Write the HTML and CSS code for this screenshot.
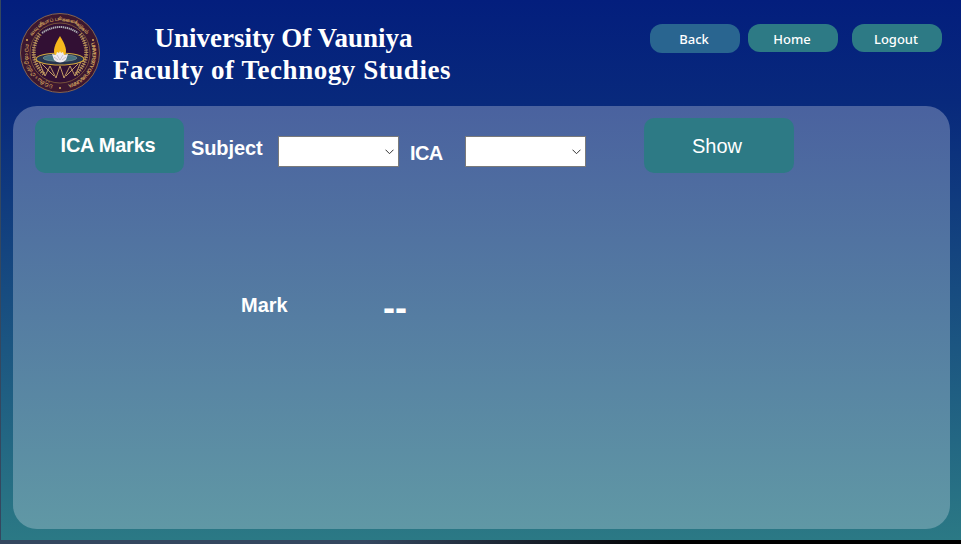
FILE: index.html
```html
<!DOCTYPE html>
<html lang="en">
<head>
<meta charset="utf-8">
<title>ICA Marks</title>
<link rel="stylesheet" href="styles.css">
</head>
<body>
<div class="window">
  <header class="header">
    <svg class="crest" viewBox="0 0 80 80" aria-hidden="true">
      <defs>
        <path id="ring-top" d="M12.4 22.8A32.5 32.5 0 0 1 67 22"/>
        <path id="ring-right" d="M70.9 30A32.5 32.5 0 0 1 46.8 71.8"/>
        <path id="ring-left" d="M33.2 71.8A32.5 32.5 0 0 1 9.1 30"/>
      </defs>
      <circle cx="40" cy="40" r="39.5" fill="#3c1730" stroke="#85634e" stroke-width="1"/>
      <circle cx="40" cy="40" r="30" fill="#321034" stroke="#86613e" stroke-width=".8"/>
      <g class="crest-text">
        <text><textPath href="#ring-top" textLength="63">வவுனியாப் பல்கலைக்கழகம்</textPath></text>
        <text><textPath href="#ring-right" textLength="53">UNIVERSITY OF VAVUNIYA</textPath></text>
        <text><textPath href="#ring-left" textLength="53">වවුනියා විශ්වවිද්‍යාලය</textPath></text>
      </g>
      <path d="M22 20Q40 8 58 20" fill="none" stroke="#a9aab0" stroke-width="2" stroke-dasharray="1.4 .6"/>
      <path d="M20 21C11 33 11 50 24 61M60 21C69 33 69 50 56 61" fill="none" stroke="#b08b55" stroke-width="4" stroke-dasharray="1.2 1.2"/>
      <path d="M20 21C11 33 11 50 24 61M60 21C69 33 69 50 56 61" fill="none" stroke="#c49d62" stroke-width=".7"/>
      <path d="M18 46L25 63M62 46L55 63M25 63L30 53 36 65 40 53 44 65 50 53 55 63M22 51L34 63M58 51L46 63" fill="none" stroke="#c19a65" stroke-width="1"/>
      <ellipse cx="40" cy="46" rx="24" ry="6" fill="#26334f" stroke="#d5a83e" stroke-width="1.2"/>
      <ellipse cx="40" cy="45" rx="17" ry="3.4" fill="#477180" stroke="#88948c" stroke-width=".6"/>
      <path d="M40 23C35 31 32 38 35.5 43Q40 45 44.5 43C48 38 45 31 40 23Z" fill="#f6b81d"/>
      <path d="M32 41L36 42 37 39 39 40 40 38 41 40 43 39 44 42 48 41 46 47Q40 52 34 47Z" fill="#eee9f0"/>
      <path d="M37 42L40 47 43 42M34 44L38 47M46 44L42 47" stroke="#aaa4b5" stroke-width=".6" fill="none"/>
      <g fill="#d8ac58"><circle cx="7" cy="27" r="1"/><circle cx="73" cy="27" r="1"/><circle cx="40" cy="75" r="1"/></g>
    </svg>
    <h1 class="title"><span class="title-university">University Of Vauniya</span><span class="title-faculty">Faculty of Technogy Studies</span></h1>
    <nav class="nav">
      <button class="nav-button back">Back</button>
      <button class="nav-button home">Home</button>
      <button class="nav-button">Logout</button>
    </nav>
  </header>
  <main class="panel">
    <div class="filters">
      <div class="action heading">ICA Marks</div>
      <label class="subject" for="subject">Subject</label>
      <div class="combo" id="subject"><svg viewBox="0 0 9 6"><path d="M.5 .7L4.5 4.7 8.5 .7"/></svg></div>
      <label class="ica" for="ica"><span>ICA</span></label>
      <div class="combo" id="ica"><svg viewBox="0 0 9 6"><path d="M.5 .7L4.5 4.7 8.5 .7"/></svg></div>
      <button class="action show">Show</button>
    </div>
    <div class="result"><span class="mark">Mark</span><span class="value">--</span></div>
  </main>
</div>
</body>
</html>
```
FILE: styles.css
```css
* { box-sizing: border-box; }
body { margin: 0; height: 544px; overflow: hidden; background: linear-gradient(90deg, #34475f, #34475f 38%, #000 70%); color: #fff; font-family: "Liberation Sans", sans-serif; }
.window { height: 540px; margin-left: 1px; padding: 0 11px 11px 12px; background: linear-gradient(#031e7d, #08297c 19%, #2b7985); }
.header { height: 106px; display: flex; align-items: flex-start; }
.crest { width: 80px; height: 80px; margin: 13px 0 0 7px; flex: none; }
.crest-text { fill: #d3a55f; font: bold 5.2px "Liberation Sans", sans-serif; }
.title { width: 340px; margin: 22px 0 0 12px; display: flex; flex-direction: column; align-items: center; font: bold 27px/32px "Liberation Serif", serif; white-space: nowrap; }
.title-university { padding-left: 3px; }
.title-faculty { letter-spacing: .55px; }
.nav { display: flex; margin: 24px 8px 0 auto; }
.nav-button { width: 90px; height: 28px; border: 0; border-radius: 12px; padding: 2px 2px 0 0; color: #fff; background: #2d7a85; font: 500 13px/20px "Noto Sans", sans-serif; }
.back { height: 29px; margin-right: 8px; padding-bottom: 1px; background: #296590; }
.home { margin-right: 14px; }
.panel { height: 423px; border-radius: 24px; padding: 12px 22px; background: linear-gradient(#4a629f, #6098a5); }
.filters { display: flex; height: 55px; font-size: 20px; font-weight: bold; }
.action { width: 150px; height: 55px; border: 0; border-radius: 10px; background: #2d7a85; color: #fff; display: flex; align-items: center; justify-content: center; font: 20px "Liberation Sans", sans-serif; }
.heading { width: 149px; font-weight: bold; padding-right: 3px; letter-spacing: -.25px; }
.subject { width: 87px; margin: 19px 0 0 7px; letter-spacing: -.1px; }
.combo { width: 121px; height: 31px; margin-top: 18px; background: #fff; border: 1px solid #7a7a7a; display: flex; align-items: center; justify-content: flex-end; padding-right: 4px; }
.combo svg { width: 9px; height: 6px; fill: none; stroke: #333; }
.ica { width: 55px; margin: 24px 0 0 11px; letter-spacing: -.6px; }
.show { margin-left: 58px; padding: 2px 4px 0 0; }
.result { display: flex; margin: 121px 0 0 206px; font-size: 20px; font-weight: bold; }
.mark { width: 142px; }
.value { font-size: 36px; line-height: 28px; }
```
